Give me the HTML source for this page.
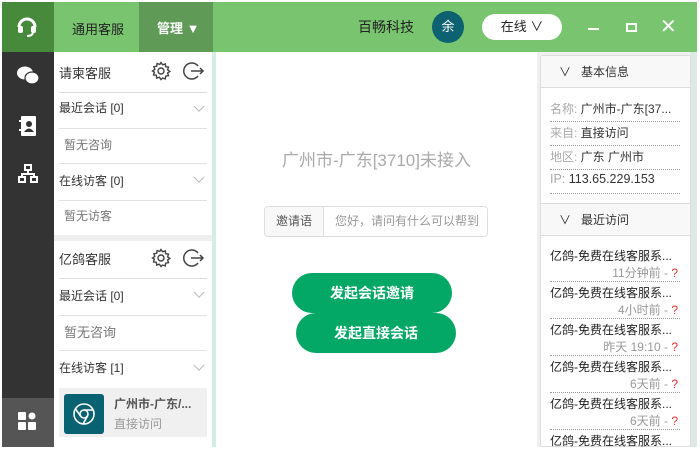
<!DOCTYPE html>
<html><head><meta charset="utf-8"><style>
*{margin:0;padding:0;box-sizing:border-box}
body{width:700px;height:450px;overflow:hidden;background:#fff;font-family:"Liberation Sans","Noto Sans CJK SC",sans-serif;font-size:12px;color:#333;position:relative}
.a{position:absolute}
.hdr{left:2px;top:2px;width:695px;height:50px;background:#78c46f}
.row{position:absolute;left:59px;width:148px;border-bottom:1px solid #e2e2e2}
.sec{font-size:12px;color:#333}
.mut{color:#777;padding-left:5px}
.chev{position:absolute;right:4px;top:50%;width:8px;height:8px;border-right:1px solid #bbb;border-bottom:1px solid #bbb;transform:translateY(-110%) rotate(45deg)}
.ri{position:absolute;left:550px;width:130px;border-bottom:1px dotted #999;font-size:12px}
.li{position:absolute;left:550px;width:130px;border-bottom:1px dotted #999;height:37px}
.li .t{position:absolute;left:0;top:2px;color:#222;white-space:nowrap}
.li .d{position:absolute;right:2px;top:19px;color:#999}
.li .d b{color:#e33;font-weight:normal}
.btn{position:absolute;height:40px;border-radius:20px;background:#04a866;color:#fff;font-weight:bold;font-size:14px;text-align:center;line-height:40px}
</style></head><body>
<div class="a hdr"></div>
<div class="a" style="left:2px;top:2px;width:52px;height:50px;background:#478a3c"></div>
<svg class="a" style="left:16px;top:14px" width="22" height="24" viewBox="0 0 22 24"><path d="M3 13 A8 8 0 0 1 19 13" fill="none" stroke="#fff" stroke-width="3"/><rect x="2" y="12" width="5" height="7" rx="2" fill="#fff"/><rect x="15" y="12" width="5" height="7" rx="2" fill="#fff"/><path d="M17 19 Q16 22 11 22" fill="none" stroke="#fff" stroke-width="2"/></svg>
<div class="a" style="left:72px;top:19px;color:#222;font-size:13px">通用客服</div>
<div class="a" style="left:139px;top:2px;width:74px;height:50px;background:#5f9b56"></div>
<div class="a" style="left:157px;top:18px;color:#fff;font-size:13px;font-weight:bold">管理 ▼</div>
<div class="a" style="left:358px;top:17px;color:#222;font-size:14px">百畅科技</div>
<div class="a" style="left:432px;top:11px;width:32px;height:32px;border-radius:50%;background:#0d6272;color:#fff;text-align:center;line-height:32px;font-size:13px">余</div>
<div class="a" style="left:482px;top:14px;width:80px;height:26px;border-radius:13px;background:#fff;text-align:center;line-height:26px;font-size:13px;color:#222">在线 ∨</div>
<div class="a" style="left:588px;top:28px;width:11px;height:2px;background:#fff"></div>
<div class="a" style="left:626px;top:23px;width:11px;height:9px;border:2px solid #fff"></div>
<div class="a" style="left:660px;top:14px;color:#fff;font-size:20px;line-height:26px">✕</div>
<div class="a" style="left:2px;top:52px;width:52px;height:395px;background:#333"></div>
<div class="a" style="left:2px;top:398px;width:52px;height:49px;background:#555"></div>
<svg class="a" style="left:17px;top:66px" width="22" height="20" viewBox="0 0 22 20"><ellipse cx="8" cy="7" rx="8" ry="6.5" fill="#fff"/><ellipse cx="15" cy="12" rx="7" ry="6" fill="#fff" stroke="#333" stroke-width="1.2"/></svg>
<svg class="a" style="left:19px;top:116px" width="18" height="20" viewBox="0 0 18 20"><rect x="2" y="0" width="15" height="20" rx="1" fill="#fff"/><circle cx="10" cy="8" r="3" fill="#333"/><path d="M5 16 Q10 9 15 16Z" fill="#333"/><rect x="0" y="4" width="4" height="2" fill="#fff"/><rect x="0" y="13" width="4" height="2" fill="#fff"/></svg>
<svg class="a" style="left:18px;top:164px" width="20" height="20" viewBox="0 0 20 20" fill="none" stroke="#fff" stroke-width="2"><rect x="7" y="1" width="6" height="5"/><rect x="1" y="13" width="6" height="5"/><rect x="13" y="13" width="6" height="5"/><path d="M10 6v4M4 13v-3h12v3"/></svg>
<svg class="a" style="left:18px;top:411px" width="20" height="20" viewBox="0 0 20 20" fill="#fff"><rect x="0" y="1" width="8" height="8" rx="1"/><rect x="0" y="11" width="8" height="8" rx="1"/><rect x="10" y="11" width="8" height="8" rx="1"/><circle cx="14" cy="5" r="3.5"/></svg>
<div class="a" style="left:54px;top:52px;width:158px;height:395px;background:#fff"></div>
<div class="a" style="left:212px;top:52px;width:4px;height:395px;background:#d5eee5"></div>
<div class="a" style="left:54px;top:235px;width:158px;height:6px;background:#eee"></div>
<div class="a sec" style="left:59px;top:63px;font-size:13px">请柬客服</div>
<svg class="a" style="left:151px;top:61px" width="20" height="20" viewBox="0 0 20 20" fill="none" stroke="#444" stroke-width="1.4"><circle cx="10" cy="10" r="3"/><path d="M10 1.5l1.6 2.3 2.7-.9.4 2.8 2.8.4-.9 2.7 2.3 1.6-2.3 1.6.9 2.7-2.8.4-.4 2.8-2.7-.9L10 18.5l-1.6-2.3-2.7.9-.4-2.8-2.8-.4.9-2.7L1.5 10l2.3-1.6-.9-2.7 2.8-.4.4-2.8 2.7.9z"/></svg>
<svg class="a" style="left:183px;top:61px" width="22" height="20" viewBox="0 0 22 20" fill="none" stroke="#444" stroke-width="1.5"><path d="M15 5A8 8 0 1 0 15 15"/><path d="M8 10h12M17 7l3 3-3 3"/></svg>
<div class="row" style="top:92px;height:1px;border-bottom:1px solid #ddd"></div>
<div class="row sec" style="top:93px;height:36px;line-height:30px">最近会话 [0]<span class="chev"></span></div>
<div class="row mut" style="top:129px;height:35px;line-height:32px">暂无咨询</div>
<div class="row sec" style="top:164px;height:37px;line-height:34px">在线访客 [0]<span class="chev"></span></div>
<div class="row mut" style="top:201px;height:34px;line-height:30px;border:none">暂无访客</div>
<div class="a sec" style="left:59px;top:249px;font-size:13px">亿鸽客服</div>
<svg class="a" style="left:151px;top:248px" width="20" height="20" viewBox="0 0 20 20" fill="none" stroke="#444" stroke-width="1.4"><circle cx="10" cy="10" r="3"/><path d="M10 1.5l1.6 2.3 2.7-.9.4 2.8 2.8.4-.9 2.7 2.3 1.6-2.3 1.6.9 2.7-2.8.4-.4 2.8-2.7-.9L10 18.5l-1.6-2.3-2.7.9-.4-2.8-2.8-.4.9-2.7L1.5 10l2.3-1.6-.9-2.7 2.8-.4.4-2.8 2.7.9z"/></svg>
<svg class="a" style="left:183px;top:248px" width="22" height="20" viewBox="0 0 22 20" fill="none" stroke="#444" stroke-width="1.5"><path d="M15 5A8 8 0 1 0 15 15"/><path d="M8 10h12M17 7l3 3-3 3"/></svg>
<div class="row" style="top:278px;height:1px;border-bottom:1px solid #ddd"></div>
<div class="row sec" style="top:279px;height:37px;line-height:34px">最近会话 [0]<span class="chev"></span></div>
<div class="row mut" style="top:316px;height:35px;line-height:34px;font-size:13px">暂无咨询</div>
<div class="row sec" style="top:351px;height:37px;line-height:34px;border:none">在线访客 [1]<span class="chev"></span></div>
<div class="a" style="left:59px;top:388px;width:148px;height:49px;background:#f0f0f0"></div>
<div class="a" style="left:64px;top:394px;width:40px;height:40px;background:#086272;border-radius:3px"></div>
<svg class="a" style="left:72px;top:402px" width="24" height="24" viewBox="0 0 24 24" fill="none" stroke="#fff" stroke-width="1.6"><circle cx="12" cy="12" r="10"/><circle cx="12" cy="12" r="4"/><path d="M12 8h9M8.5 14l-5-7M15.5 14l-4.5 8"/></svg>
<div class="a" style="left:114px;top:395px;font-weight:bold;color:#555;font-size:12px">广州市-广东/...</div>
<div class="a" style="left:114px;top:415px;color:#999">直接访问</div>
<div class="a" style="left:216px;top:146px;width:321px;text-align:center;color:#aaa;font-size:17px">广州市-广东[3710]未接入</div>
<div class="a" style="left:264px;top:206px;width:224px;height:31px;border:1px solid #ddd;border-radius:4px;overflow:hidden">
<div class="a" style="left:0;top:0;width:59px;height:29px;background:#f8f8f8;border-right:1px solid #ddd;text-align:center;line-height:29px;color:#555">邀请语</div>
<div class="a" style="left:70px;top:0;line-height:29px;color:#999;white-space:nowrap">您好，请问有什么可以帮到</div></div>
<div class="btn" style="left:292px;top:273px;width:160px">发起会话邀请</div>
<div class="btn" style="left:296px;top:313px;width:160px">发起直接会话</div>
<div class="a" style="left:537px;top:52px;width:160px;height:395px;background:#f0f0f0"></div>
<div class="a" style="left:690px;top:52px;width:7px;height:395px;background:#dde9e4"></div>
<div class="a" style="left:540px;top:55px;width:151px;height:392px;background:#fff;border:1px solid #ddd;border-radius:3px"></div>
<div class="a" style="left:541px;top:56px;width:149px;height:32px;background:#f8f8f8;border-bottom:1px solid #ddd;line-height:32px;padding-left:18px;font-size:12px">∨&nbsp;&nbsp; 基本信息</div>
<div class="ri" style="top:100px;height:22px"><span style="color:#aaa">名称:</span> 广州市-广东[37...</div>
<div class="ri" style="top:124px;height:22px"><span style="color:#aaa">来自:</span> 直接访问</div>
<div class="ri" style="top:148px;height:22px"><span style="color:#aaa">地区:</span> 广东 广州市</div>
<div class="ri" style="top:172px;height:22px;font-size:12.5px"><span style="color:#aaa">IP:</span> 113.65.229.153</div>
<div class="a" style="left:541px;top:203px;width:149px;height:33px;background:#f8f8f8;border-top:1px solid #ddd;border-bottom:1px solid #ddd;line-height:32px;padding-left:18px">∨&nbsp;&nbsp; 最近访问</div>
<div class="li" style="top:245px"><span class="t">亿鸽-免费在线客服系...</span><span class="d">11分钟前 - <b>?</b></span></div>
<div class="li" style="top:282px"><span class="t">亿鸽-免费在线客服系...</span><span class="d">4小时前 - <b>?</b></span></div>
<div class="li" style="top:319px"><span class="t">亿鸽-免费在线客服系...</span><span class="d">昨天 19:10 - <b>?</b></span></div>
<div class="li" style="top:356px"><span class="t">亿鸽-免费在线客服系...</span><span class="d">6天前 - <b>?</b></span></div>
<div class="li" style="top:393px"><span class="t">亿鸽-免费在线客服系...</span><span class="d">6天前 - <b>?</b></span></div>
<div class="li" style="top:430px;border:none"><span class="t">亿鸽-免费在线客服系...</span></div>
<div class="a" style="left:0;top:447px;width:700px;height:3px;background:#fff"></div>
</body></html>
